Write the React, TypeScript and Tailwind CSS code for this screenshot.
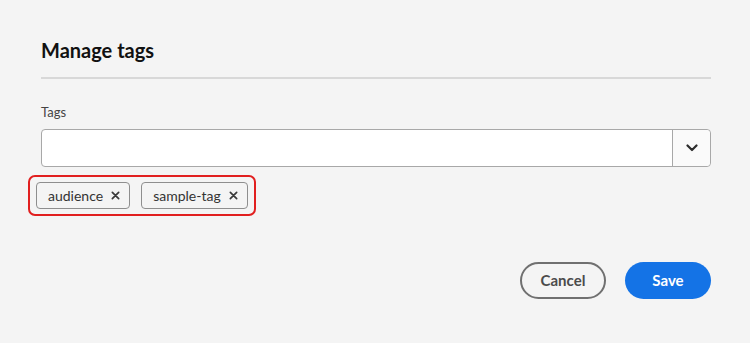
import React, { useState } from "react";

const font = { fontFamily: "Lato, 'Open Sans', sans-serif" };

function ChevronDown() {
  return (
    <svg width="12" height="8" viewBox="0 0 12 8" fill="none">
      <path d="M1.5 1.5 6 6l4.5-4.5" stroke="#2c2c2c" strokeWidth="2.2" strokeLinecap="round" strokeLinejoin="round" />
    </svg>
  );
}

function Cross() {
  return (
    <svg width="9" height="9" viewBox="0 0 10 10" fill="none">
      <path d="M1.5 1.5l7 7M8.5 1.5l-7 7" stroke="#3a3a3a" strokeWidth="1.9" strokeLinecap="round" />
    </svg>
  );
}

function App() {
  const [tags, setTags] = useState(["audience", "sample-tag"]);

  return (
    <div className="w-full h-[343px] bg-[#f4f4f4] pl-[41px] pr-[39px] pt-[36px] text-[#222]" style={font}>
      <h1 className="text-[20px] font-bold leading-[28px] text-[#111]">Manage tags</h1>
      <div className="mt-[13px] h-[2px] bg-[#d8d8d8]" />

      <label className="block mt-[24px] text-[13px] leading-[18px] text-[#444]">Tags</label>
      <div className="mt-[8px] flex h-[38px] rounded-[4px] border border-[#a8a8a8] bg-white">
        <input className="flex-1 min-w-0 bg-transparent px-3 outline-none" />
        <button className="w-[38px] flex items-center justify-center border-l border-[#a8a8a8] bg-[#fafafa] rounded-r-[4px]">
          <ChevronDown />
        </button>
      </div>

      <div className="mt-[8px] -ml-[13px] inline-flex gap-[11px] rounded-[7px] border-2 border-[#e11f1f] px-[6px] py-[5px]">
        {tags.map((t) => (
          <div
            key={t}
            className="flex items-center gap-[8px] h-[27px] rounded-[4px] border border-[#8e8e8e] bg-[#f4f4f4] pl-[11px] pr-[9px] text-[14px] text-[#333]"
          >
            <span>{t}</span>
            <button onClick={() => setTags(tags.filter((x) => x !== t))} className="flex items-center">
              <Cross />
            </button>
          </div>
        ))}
      </div>

      <div className="mt-[46px] flex justify-end gap-[19px]">
        <button className="w-[86px] h-[37px] rounded-full border-2 border-[#707070] text-[15px] font-bold text-[#4b4b4b]">
          Cancel
        </button>
        <button className="w-[86px] h-[37px] rounded-full bg-[#1473e6] text-[15px] font-bold text-white">
          Save
        </button>
      </div>
    </div>
  );
}

export default App;
